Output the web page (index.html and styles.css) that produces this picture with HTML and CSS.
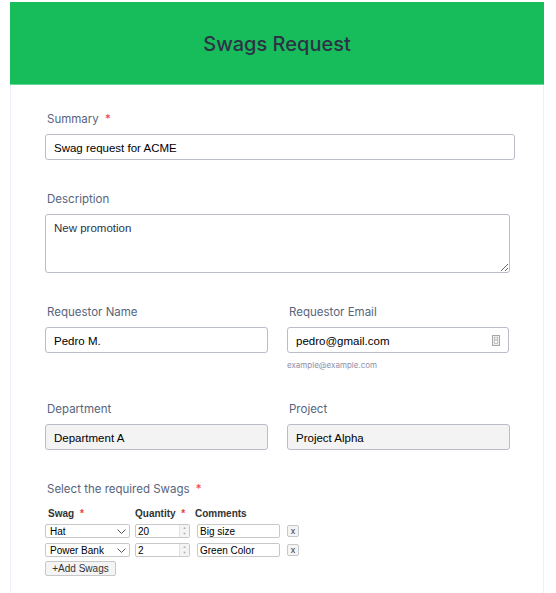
FILE: index.html
```html
<!DOCTYPE html>
<html lang="en">

<head>
    <meta charset="UTF-8" />
    <title>Swags Request</title>
    <link rel="stylesheet" href="styles.css">
</head>

<body>
    <div class="form-wrap">
        <div class="form-header">
            <h1>Swags Request</h1>
        </div>

        <div class="form-body">
            <div class="field">
                <label>Summary <span class="req">*</span></label>
                <input class="text-input summary-input" type="text" value="Swag request for ACME">
            </div>

            <div class="field">
                <label>Description</label>
                <textarea class="text-area">New promotion</textarea>
            </div>

            <div class="field-row">
                <div class="field">
                    <label>Requestor Name</label>
                    <input class="text-input" type="text" value="Pedro M.">
                </div>
                <div class="field">
                    <label>Requestor Email</label>
                    <div class="email-box">
                        <input class="text-input" type="text" value="pedro@gmail.com">
                        <svg class="email-icon" width="8" height="11" viewBox="0 0 8 11">
                            <rect x="0.5" y="0.5" width="7" height="10" fill="#eeeeee" stroke="#a8a8a8" />
                            <rect x="2.5" y="2.5" width="3" height="6" fill="#f8f8f8" stroke="#c4c4c4" />
                            <rect x="3.5" y="4" width="1" height="1.5" fill="#9a9a9a" />
                        </svg>
                    </div>
                    <div class="hint">example@example.com</div>
                </div>
            </div>

            <div class="field-row">
                <div class="field">
                    <label>Department</label>
                    <input class="text-input readonly" type="text" value="Department A" readonly>
                </div>
                <div class="field">
                    <label>Project</label>
                    <input class="text-input readonly" type="text" value="Project Alpha" readonly>
                </div>
            </div>

            <div class="field">
                <label>Select the required Swags <span class="req">*</span></label>
                <div class="swag-table">
                    <div class="swag-head first">Swag <span class="req">*</span></div>
                    <div class="swag-head">Quantity <span class="req">*</span></div>
                    <div class="swag-head">Comments</div>
                    <div></div>

                    <div class="select-box">
                        <select class="swag-select">
                            <option>Hat</option>
                            <option>Power Bank</option>
                        </select>
                        <svg class="chevron" width="9" height="5" viewBox="0 0 9 5">
                            <path d="M0.5 0.5 L4.5 4.5 L8.5 0.5" fill="none" stroke="#555" stroke-width="1" />
                        </svg>
                    </div>
                    <div class="qty-box">
                        <input class="swag-qty" type="text" value="20">
                        <span class="spinner"><span>&#9650;</span><span>&#9660;</span></span>
                    </div>
                    <input class="swag-comment" type="text" value="Big size">
                    <button class="swag-remove">x</button>

                    <div class="select-box">
                        <select class="swag-select">
                            <option>Hat</option>
                            <option selected>Power Bank</option>
                        </select>
                        <svg class="chevron" width="9" height="5" viewBox="0 0 9 5">
                            <path d="M0.5 0.5 L4.5 4.5 L8.5 0.5" fill="none" stroke="#555" stroke-width="1" />
                        </svg>
                    </div>
                    <div class="qty-box">
                        <input class="swag-qty" type="text" value="2">
                        <span class="spinner"><span>&#9650;</span><span>&#9660;</span></span>
                    </div>
                    <input class="swag-comment" type="text" value="Green Color">
                    <button class="swag-remove">x</button>
                </div>
                <button class="add-swag">+Add Swags</button>
            </div>
        </div>
    </div>
</body>

</html>
```

FILE: styles.css
```css
body {
    margin: 0;
    background: #fff;
    font-family: Inter, "Liberation Sans", sans-serif;
}

.form-wrap {
    margin: 2px 0 0 10px;
    width: 534px;
}

.form-header {
    height: 82px;
    background: #18bd5b;
    border-bottom: 1px solid #62d89b;
    display: flex;
    align-items: center;
    justify-content: center;
}

.form-header h1 {
    margin: 2px 0 0;
    font-size: 20px;
    font-weight: 500;
    color: #2c3345;
}

.form-body {
    border-left: 1px solid #eeeff8;
    border-right: 1px solid #eeeff8;
    padding: 27px 0 20px 34px;
    display: flex;
    flex-direction: column;
    gap: 32px;
}

.field {
    display: flex;
    flex-direction: column;
}

.field label {
    font-size: 11.5px;
    line-height: 15px;
    color: #57647e;
    padding-left: 2px;
    margin-bottom: 7px;
}

.req {
    color: #f23a3c;
    margin-left: 3px;
}

.field-row {
    display: grid;
    grid-template-columns: 223px 222px;
    gap: 19px;
}

.text-input {
    box-sizing: border-box;
    width: 223px;
    height: 26px;
    padding: 1px 8px 0;
    border: 1px solid #b8bdc9;
    border-radius: 3px;
    font-family: "Liberation Sans", Arial, sans-serif;
    font-size: 11.5px;
    color: #000;
    background: #fff;
    outline: none;
}

.summary-input {
    width: 470px;
}

.readonly {
    background: #f3f3f3;
}

.text-area {
    box-sizing: border-box;
    width: 465px;
    height: 59px;
    padding: 7px 8px;
    border: 1px solid #b8bdc9;
    border-radius: 3px;
    font-family: "Liberation Sans", Arial, sans-serif;
    font-size: 11.5px;
    color: #2c3345;
}

.email-box {
    position: relative;
    width: 222px;
}

.email-box .text-input {
    width: 222px;
}

.email-icon {
    position: absolute;
    right: 9px;
    top: 8px;
}

.hint {
    margin-top: 7px;
    font-size: 8px;
    line-height: 10px;
    color: #8d8fa8;
}

.swag-table {
    display: grid;
    grid-template-columns: 85px 55px 83px 12px;
    column-gap: 5px;
    row-gap: 5px;
    align-items: center;
    margin-top: 4px;
    font-family: "Liberation Sans", Arial, sans-serif;
}

.swag-head {
    font-size: 10px;
    font-weight: bold;
    color: #333;
}

.swag-head.first {
    padding-left: 3px;
}

.select-box,
.qty-box {
    position: relative;
    height: 14px;
}

.swag-select,
.swag-qty,
.swag-comment {
    display: block;
    box-sizing: border-box;
    height: 14px;
    font-family: "Liberation Sans", Arial, sans-serif;
    font-size: 10px;
    border: 1px solid #c8c8c8;
    border-radius: 2px;
    padding: 0 2px;
    background: #fff;
    color: #000;
    outline: none;
}

.swag-select {
    appearance: none;
    width: 85px;
    padding-left: 4px;
}

.chevron {
    position: absolute;
    right: 4px;
    top: 5px;
    pointer-events: none;
}

.swag-qty {
    width: 55px;
    padding-right: 12px;
}

.spinner {
    position: absolute;
    right: 1px;
    top: 1px;
    width: 9px;
    height: 12px;
    display: flex;
    flex-direction: column;
    border-left: 1px solid #e2e2e2;
    background: #f4f4f4;
}

.spinner span {
    flex: 1;
    font-size: 4px;
    line-height: 6px;
    text-align: center;
    color: #b0b0b0;
}

.swag-comment {
    margin-left: 2px;
    width: 83px;
}

.swag-remove {
    margin-left: 4px;
    width: 12px;
    height: 12px;
    padding: 0;
    font-family: "Liberation Sans", Arial, sans-serif;
    font-size: 9px;
    line-height: 9px;
    border: 1px solid #c8c8c8;
    border-radius: 2px;
    background: #f4f4f4;
    color: #333;
}

.add-swag {
    align-self: flex-start;
    margin-top: 4px;
    width: 71px;
    height: 15px;
    padding: 0;
    font-family: "Liberation Sans", Arial, sans-serif;
    font-size: 10px;
    color: #333;
    border: 1px solid #c8c8c8;
    border-radius: 2px;
    background: #f4f4f4;
}
```
